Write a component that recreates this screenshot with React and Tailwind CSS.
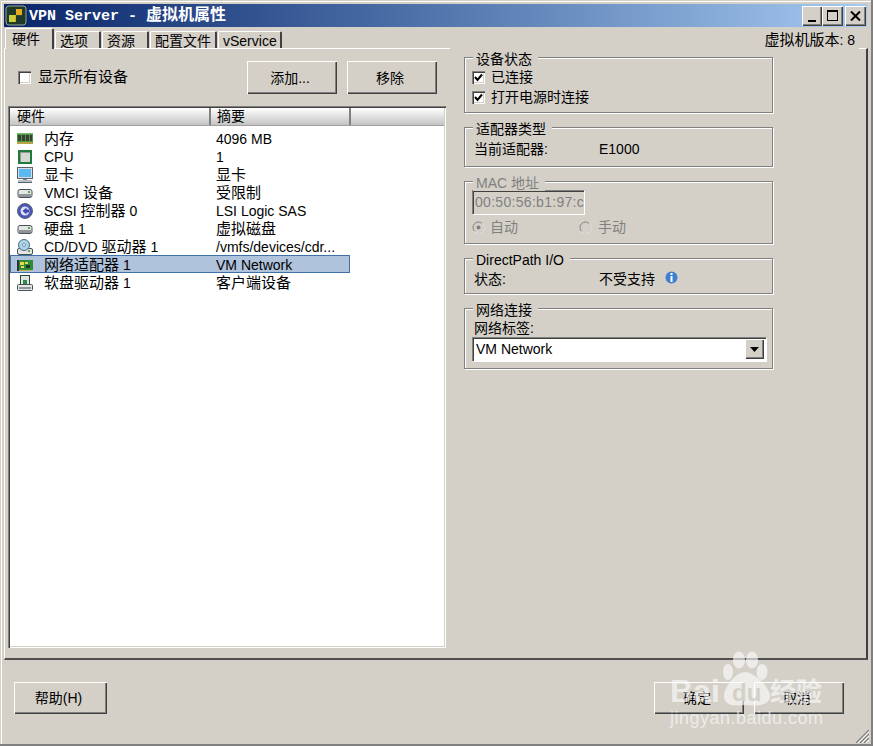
const FONT = "font-['Liberation_Sans','Noto_Sans_CJK_SC',sans-serif]";
const RAISED = "shadow-[inset_1px_1px_0_#fff,inset_-1px_-1px_0_#404040,inset_-2px_-2px_0_#808080]";
const SUNKEN = "shadow-[inset_1px_1px_0_#808080,inset_2px_2px_0_#404040,inset_-1px_-1px_0_#fff,inset_-2px_-2px_0_#d4d0c8]";

// the list and a few labels have CJK one pixel larger than the latin beside it
function Big({ text }) {
  return text.split(/([\u4e00-\u9fff]+)/).map((part, i) =>
    i % 2 ? (
      <span key={i} className="text-[15px]">
        {part}
      </span>
    ) : (
      part
    )
  );
}

function MemIcon() {
  return (
    <svg width="16" height="16" viewBox="0 0 16 16">
      <rect x="0" y="2" width="16" height="11" fill="#4c9a44" />
      <rect x="0" y="2" width="16" height="1" fill="#79b86c" />
      <rect x="1" y="4" width="3" height="6" fill="#3a3f34" />
      <rect x="5" y="4" width="3" height="6" fill="#3a3f34" />
      <rect x="9" y="4" width="3" height="6" fill="#3a3f34" />
      <rect x="13" y="4" width="2" height="6" fill="#3a3f34" />
      <rect x="0" y="11" width="16" height="2" fill="#b9a548" />
    </svg>
  );
}

function CpuIcon() {
  return (
    <svg width="16" height="16" viewBox="0 0 16 16">
      <rect x="1" y="1" width="14" height="14" fill="#1f7a3c" />
      <rect x="3" y="3" width="10" height="10" fill="#d5d8d2" />
      <rect x="3" y="3" width="10" height="1" fill="#8d9a8c" />
      <rect x="3" y="3" width="1" height="10" fill="#8d9a8c" />
    </svg>
  );
}

function MonitorIcon() {
  return (
    <svg width="16" height="16" viewBox="0 0 16 16">
      <rect x="0.5" y="0.5" width="15" height="11" fill="#d8dde0" stroke="#59636b" />
      <rect x="2" y="2" width="12" height="8" fill="#5cb8f0" />
      <rect x="6" y="12" width="4" height="1" fill="#7b858c" />
      <rect x="1" y="13" width="14" height="3" fill="#b7bdc2" />
      <rect x="1" y="15" width="14" height="1" fill="#59636b" />
    </svg>
  );
}

function DriveIcon() {
  return (
    <svg width="16" height="16" viewBox="0 0 16 16">
      <rect x="1" y="4.5" width="14" height="8" rx="2" fill="#e4e6e4" stroke="#4b5056" />
      <rect x="2" y="9" width="12" height="3" fill="#8f959a" />
      <rect x="11" y="6" width="2" height="2" fill="#5aa850" />
    </svg>
  );
}

function ScsiIcon() {
  return (
    <svg width="16" height="16" viewBox="0 0 16 16">
      <circle cx="8" cy="8" r="7.5" fill="#4a55b8" stroke="#5f6670" />
      <circle cx="8" cy="8" r="4.5" fill="#dfe3f5" />
      <path d="M9.5 4.5 L5.5 8 L9.5 11.5 L9.5 9.5 L12 9.5 L12 6.5 L9.5 6.5 Z" fill="#3f49b0" />
    </svg>
  );
}

function CdIcon() {
  return (
    <svg width="16" height="16" viewBox="0 0 16 16">
      <rect x="0.5" y="9.5" width="15" height="6" rx="1.5" fill="#e4e6e4" stroke="#4b5056" />
      <rect x="11" y="11" width="2" height="2" fill="#5aa850" />
      <circle cx="7" cy="6" r="5.5" fill="#a8d4ec" stroke="#4f6a80" />
      <circle cx="7" cy="6" r="1.5" fill="#fff" stroke="#4f6a80" strokeWidth="0.7" />
    </svg>
  );
}

function NicIcon() {
  return (
    <svg width="16" height="16" viewBox="0 0 16 16">
      <rect x="0" y="3" width="16" height="10" fill="#2f8a3a" />
      <rect x="0" y="3" width="2" height="11" fill="#30343a" />
      <rect x="3" y="5" width="4" height="3" fill="#e8d84a" />
      <rect x="8" y="5" width="3" height="2" fill="#e8d84a" />
      <rect x="4" y="9" width="3" height="2" fill="#e8d84a" />
      <rect x="9" y="8" width="4" height="3" fill="#1d3a22" />
      <rect x="2" y="13" width="12" height="1" fill="#c9b04a" />
    </svg>
  );
}

function FloppyIcon() {
  return (
    <svg width="16" height="16" viewBox="0 0 16 16">
      <rect x="3.5" y="0.5" width="9" height="9" fill="#dfe5df" stroke="#2e4636" />
      <rect x="6" y="5" width="4" height="4" fill="#2f8a4a" />
      <rect x="0.5" y="9.5" width="15" height="6" rx="1" fill="#e4e6e4" stroke="#4b5056" />
      <rect x="2" y="12" width="12" height="2" fill="#8f959a" />
    </svg>
  );
}

const ROWS = [
  { icon: <MemIcon />, name: "内存", value: "4096 MB" },
  { icon: <CpuIcon />, name: "CPU", value: "1" },
  { icon: <MonitorIcon />, name: "显卡", value: "显卡" },
  { icon: <DriveIcon />, name: "VMCI 设备", value: "受限制" },
  { icon: <ScsiIcon />, name: "SCSI 控制器 0", value: "LSI Logic SAS" },
  { icon: <DriveIcon />, name: "硬盘 1", value: "虚拟磁盘" },
  { icon: <CdIcon />, name: "CD/DVD 驱动器 1", value: "/vmfs/devices/cdr..." },
  { icon: <NicIcon />, name: "网络适配器 1", value: "VM Network", selected: true },
  { icon: <FloppyIcon />, name: "软盘驱动器 1", value: "客户端设备" },
];

function Tab({ label, active, width }) {
  return (
    <div
      className={`${width} flex items-center rounded-t-[2px] bg-[#d4d0c8] border-t border-l border-white border-r-2 border-r-[#404040] ${
        active ? "h-[21px] pl-[6px] relative z-10 -mb-px" : "h-[17px] pl-[4px] pt-[1px]"
      }`}
    >
      {label}
    </div>
  );
}

function Button({ children, className }) {
  return (
    <button type="button" className={`${RAISED} bg-[#d4d0c8] text-[14px] text-black pr-[4px] ${className}`}>
      {children}
    </button>
  );
}

function Check({ checked }) {
  return (
    <span className={`${SUNKEN} w-[13px] h-[13px] bg-white flex items-center justify-center shrink-0`}>
      {checked && (
        <svg width="9" height="9" viewBox="0 0 9 9">
          <path d="M1 4 L3.5 7 L8 1.5" fill="none" stroke="#000" strokeWidth="2" />
        </svg>
      )}
    </span>
  );
}

function Radio({ checked }) {
  return (
    <svg width="13" height="13" viewBox="0 0 13 13" className="shrink-0">
      <circle cx="6.5" cy="6.5" r="5.5" fill="#d4d0c8" stroke="#808080" />
      <path d="M10.5 2.5 A5.5 5.5 0 0 1 2.5 10.5" fill="none" stroke="#fff" />
      {checked && <circle cx="6.5" cy="6.5" r="2" fill="#808080" />}
    </svg>
  );
}

function Group({ title, height, disabled, children }) {
  return (
    <div
      className={`${height} relative w-[309px] border border-[#808080] shadow-[inset_1px_1px_0_#fff,1px_1px_0_#fff]`}
    >
      <span
        className={`absolute left-[8px] top-[-7px] bg-[#d4d0c8] pl-[3px] pr-[6px] leading-[16px] ${
          disabled ? "text-[#808080]" : ""
        }`}
      >
        {title}
      </span>
      {children}
    </div>
  );
}

function Watermark() {
  return (
    <div className="absolute left-[668px] top-[652px] w-[160px] h-[76px] pointer-events-none text-white/60 font-['Liberation_Sans','Noto_Sans_CJK_SC',sans-serif]">
      <span className="absolute left-[2px] top-[22px] text-[32px] leading-[34px] font-bold">Bai</span>
      <svg width="54" height="60" viewBox="0 0 54 60" className="absolute left-[52px] top-[-2px]">
        <ellipse cx="19" cy="10" rx="6" ry="8.5" fill="#fff" fillOpacity="0.6" />
        <ellipse cx="32" cy="10" rx="6" ry="8.5" fill="#fff" fillOpacity="0.6" />
        <ellipse cx="8" cy="22" rx="5" ry="8" fill="#fff" fillOpacity="0.6" />
        <ellipse cx="42" cy="22" rx="5.5" ry="8" fill="#fff" fillOpacity="0.6" />
        <path d="M25 22 C35 22 50 38 50 46 C50 56 36 56 25 55 C14 56 4 56 4 46 C4 38 15 22 25 22 Z" fill="#fff" fillOpacity="0.6" />
      </svg>
      <span className="absolute left-[64px] top-[28px] text-[24px] leading-[26px] font-bold text-[#d4d0c8]">du</span>
      <span className="absolute left-[102px] top-[23px] text-[26px] leading-[34px] font-bold whitespace-nowrap">经验</span>
      <span className="absolute left-[2px] top-[56px] text-[18px] leading-[20px] tracking-[0.5px] whitespace-nowrap">jingyan.baidu.com</span>
    </div>
  );
}

export default function App() {
  return (
    <div
      className={`${FONT} relative w-[873px] h-[746px] overflow-hidden bg-[#d4d0c8] text-[14px] text-black leading-[18px] flex flex-col pt-[4px] pl-[4px] pr-[4px] border-b-2 border-r-2 border-b-[#808080] border-r-[#808080] shadow-[inset_1px_1px_0_#d4d0c8,inset_2px_2px_0_#fff]`}
    >
      {/* title bar */}
      <div className="h-[23px] shrink-0 flex items-center bg-gradient-to-r from-[#0a246a] to-[#a6caf0] pl-[1px] pr-[1px]">
        <svg width="22" height="21" viewBox="0 0 22 21" className="mr-[2px] shrink-0">
          <rect x="1" y="1" width="20" height="19" rx="3" fill="#1f3a2a" stroke="#9aa88c" />
          <path d="M4 10 H11 V4 H17 V11 H11 V17 H4 Z" fill="#e8a91e" />
          <path d="M11 10 H17 V11 H11 Z" fill="#2c4a2c" />
          <path d="M4 10 H10 V17 H4 Z" fill="#c9d23c" />
        </svg>
        <span className="font-['Liberation_Mono','Noto_Sans_CJK_SC',monospace] font-bold text-[15px] text-white whitespace-pre pt-[2px]">
          VPN Server - <span className="text-[16px]">虚拟机属性</span>
        </span>
        <div className="ml-auto flex items-center">
          <div className={`${RAISED} w-[20px] h-[20px] bg-[#d4d0c8] flex items-end justify-center pb-[4px]`}>
            <span className="w-[8px] h-[2px] bg-black" />
          </div>
          <div className={`${RAISED} w-[21px] h-[20px] bg-[#d4d0c8] flex items-center justify-center`}>
            <span className="w-[11px] h-[11px] border border-black border-t-2" />
          </div>
          <div className={`${RAISED} w-[21px] h-[20px] bg-[#d4d0c8] flex items-center justify-center ml-[2px]`}>
            <svg width="11" height="10" viewBox="0 0 11 10">
              <path d="M1 0.5 L10 9.5 M10 0.5 L1 9.5" stroke="#000" strokeWidth="2" />
            </svg>
          </div>
        </div>
      </div>

      {/* tab strip */}
      <div className="h-[21px] shrink-0 flex items-end pl-[1px] gap-[1px] relative">
        <Tab label="硬件" active width="w-[49px]" />
        <Tab label="选项" width="w-[46px]" />
        <Tab label="资源" width="w-[47px]" />
        <Tab label="配置文件" width="w-[67px]" />
        <Tab label="vService" width="w-[64px]" />
        <span className="ml-auto mr-[8px] w-[409px] h-[20px] leading-[22px] pr-[4px] text-right -mb-px whitespace-nowrap relative z-10 bg-[#d4d0c8]">
          <Big text="虚拟机版本: 8" />
        </span>
      </div>

      {/* tab panel */}
      <div className="h-[612px] shrink-0 flex -mr-[1px] pl-[3px] border-r-2 border-r-[#404040] border-b-2 border-b-[#505050] border-t border-t-white border-l border-l-white">
        <div className="w-[438px] shrink-0 flex flex-col">
          <div className="h-[57px] shrink-0 flex items-center">
            <label className="flex items-center gap-[7px] ml-[10px] mt-[-1px]">
              <Check />
              <span>
                <Big text="显示所有设备" />
              </span>
            </label>
            <Button className="w-[90px] h-[33px] ml-auto">添加...</Button>
            <Button className="w-[90px] h-[33px] ml-[10px] mr-[9px]">移除</Button>
          </div>
          <div className={`${SUNKEN} h-[542px] bg-white p-[2px] flex flex-col`}>
            <div className="h-[18px] shrink-0 grid grid-cols-[201px_140px_1fr] bg-gradient-to-b from-white to-[#c4c4c4] border-b border-[#a0a0a0]">
              <span className="pl-[7px] border-r-2 border-r-[#808080] leading-[16px]">硬件</span>
              <span className="pl-[6px] border-r-2 border-r-[#808080] leading-[16px]">摘要</span>
              <span />
            </div>
            <div className="pt-[3px]">
              {ROWS.map((row) => (
                <div
                  key={row.name}
                  className={`h-[18px] w-[340px] grid grid-cols-[200px_138px] items-center border ${
                    row.selected ? "bg-[#afc3dc] border-[#3f73a8]" : "border-transparent"
                  }`}
                >
                  <span className="flex items-center pl-[6px] gap-[11px] whitespace-nowrap">
                    {row.icon}
                    <span>
                      <Big text={row.name} />
                    </span>
                  </span>
                  <span className="pl-[5px] whitespace-nowrap">
                    <Big text={row.value} />
                  </span>
                </div>
              ))}
            </div>
          </div>
        </div>

        <div className="ml-[18px] pt-[8px] flex flex-col gap-[14px]">
          <Group title="设备状态" height="h-[56px]">
            <div className="pl-[7px] pt-[10px] flex flex-col gap-[2px]">
              <label className="flex items-center gap-[6px]"><Check checked /><span>已连接</span></label>
              <label className="flex items-center gap-[6px]"><Check checked /><span>打开电源时连接</span></label>
            </div>
          </Group>
          <Group title="适配器类型" height="h-[40px]">
            <div className="pl-[9px] pt-[12px] flex">
              <span className="w-[125px]">当前适配器:</span>
              <span>E1000</span>
            </div>
          </Group>
          <Group title="MAC 地址" height="h-[63px]" disabled>
            <div className="pl-[7px] pt-[8px] text-[#808080]">
              <div className="w-[112px] h-[24px] bg-[#d4d0c8] shadow-[inset_1px_1px_0_#808080,inset_2px_2px_0_#404040,1px_1px_0_#fff] pl-[3px] flex items-center overflow-hidden whitespace-nowrap tracking-[0.3px]">
                00:50:56:b1:97:c
              </div>
              <div className="flex items-center mt-[4px] h-[18px]">
                <Radio checked />
                <span className="ml-[5px] w-[89px]">自动</span>
                <Radio />
                <span className="ml-[6px]">手动</span>
              </div>
            </div>
          </Group>
          <Group title="DirectPath I/O" height="h-[36px]">
            <div className="pl-[9px] pt-[11px] flex items-center">
              <span className="w-[125px]">状态:</span>
              <span>不受支持</span>
              <svg width="13" height="13" viewBox="0 0 13 13" className="ml-[10px] -mt-[3px]">
                <circle cx="6.5" cy="6.5" r="6" fill="#3f7fd0" />
                <rect x="5.5" y="2" width="2" height="2" fill="#fff" />
                <rect x="5.5" y="5" width="2" height="6" fill="#fff" />
              </svg>
            </div>
          </Group>
          <Group title="网络连接" height="h-[61px]">
            <div className="pl-[7px] pt-[11px]">
              <div className="pl-[2px] leading-[16px] mb-[1px]">网络标签:</div>
              <div className="w-[294px] h-[24px] bg-white shadow-[inset_1px_1px_0_#808080,inset_2px_2px_0_#404040,1px_1px_0_#fff] flex items-center pl-[4px] pr-[2px]">
                <span>VM Network</span>
                <div className={`${RAISED} ml-auto w-[19px] h-[20px] bg-[#d4d0c8] flex items-center justify-center`}>
                  <svg width="9" height="5" viewBox="0 0 9 5"><path d="M0 0 H9 L4.5 5 Z" fill="#000" /></svg>
                </div>
              </div>
            </div>
          </Group>
        </div>
      </div>

      {/* footer */}
      <div className="flex pt-[22px] pl-[10px] pr-[23px]">
        <Button className="w-[93px] h-[32px]">帮助(H)</Button>
        <Button className="w-[90px] h-[32px] ml-auto">确定</Button>
        <Button className="w-[90px] h-[32px] ml-[10px]">取消</Button>
      </div>

      <svg width="14" height="14" viewBox="0 0 14 14" className="absolute right-[2px] bottom-[1px]">
        <path d="M1 14 L14 1 M5 14 L14 5 M9 14 L14 9" stroke="#808080" strokeWidth="1.2" />
        <path d="M3 14 L14 3 M7 14 L14 7 M11 14 L14 11" stroke="#fff" strokeWidth="1" />
      </svg>

      <Watermark />
    </div>
  );
}
